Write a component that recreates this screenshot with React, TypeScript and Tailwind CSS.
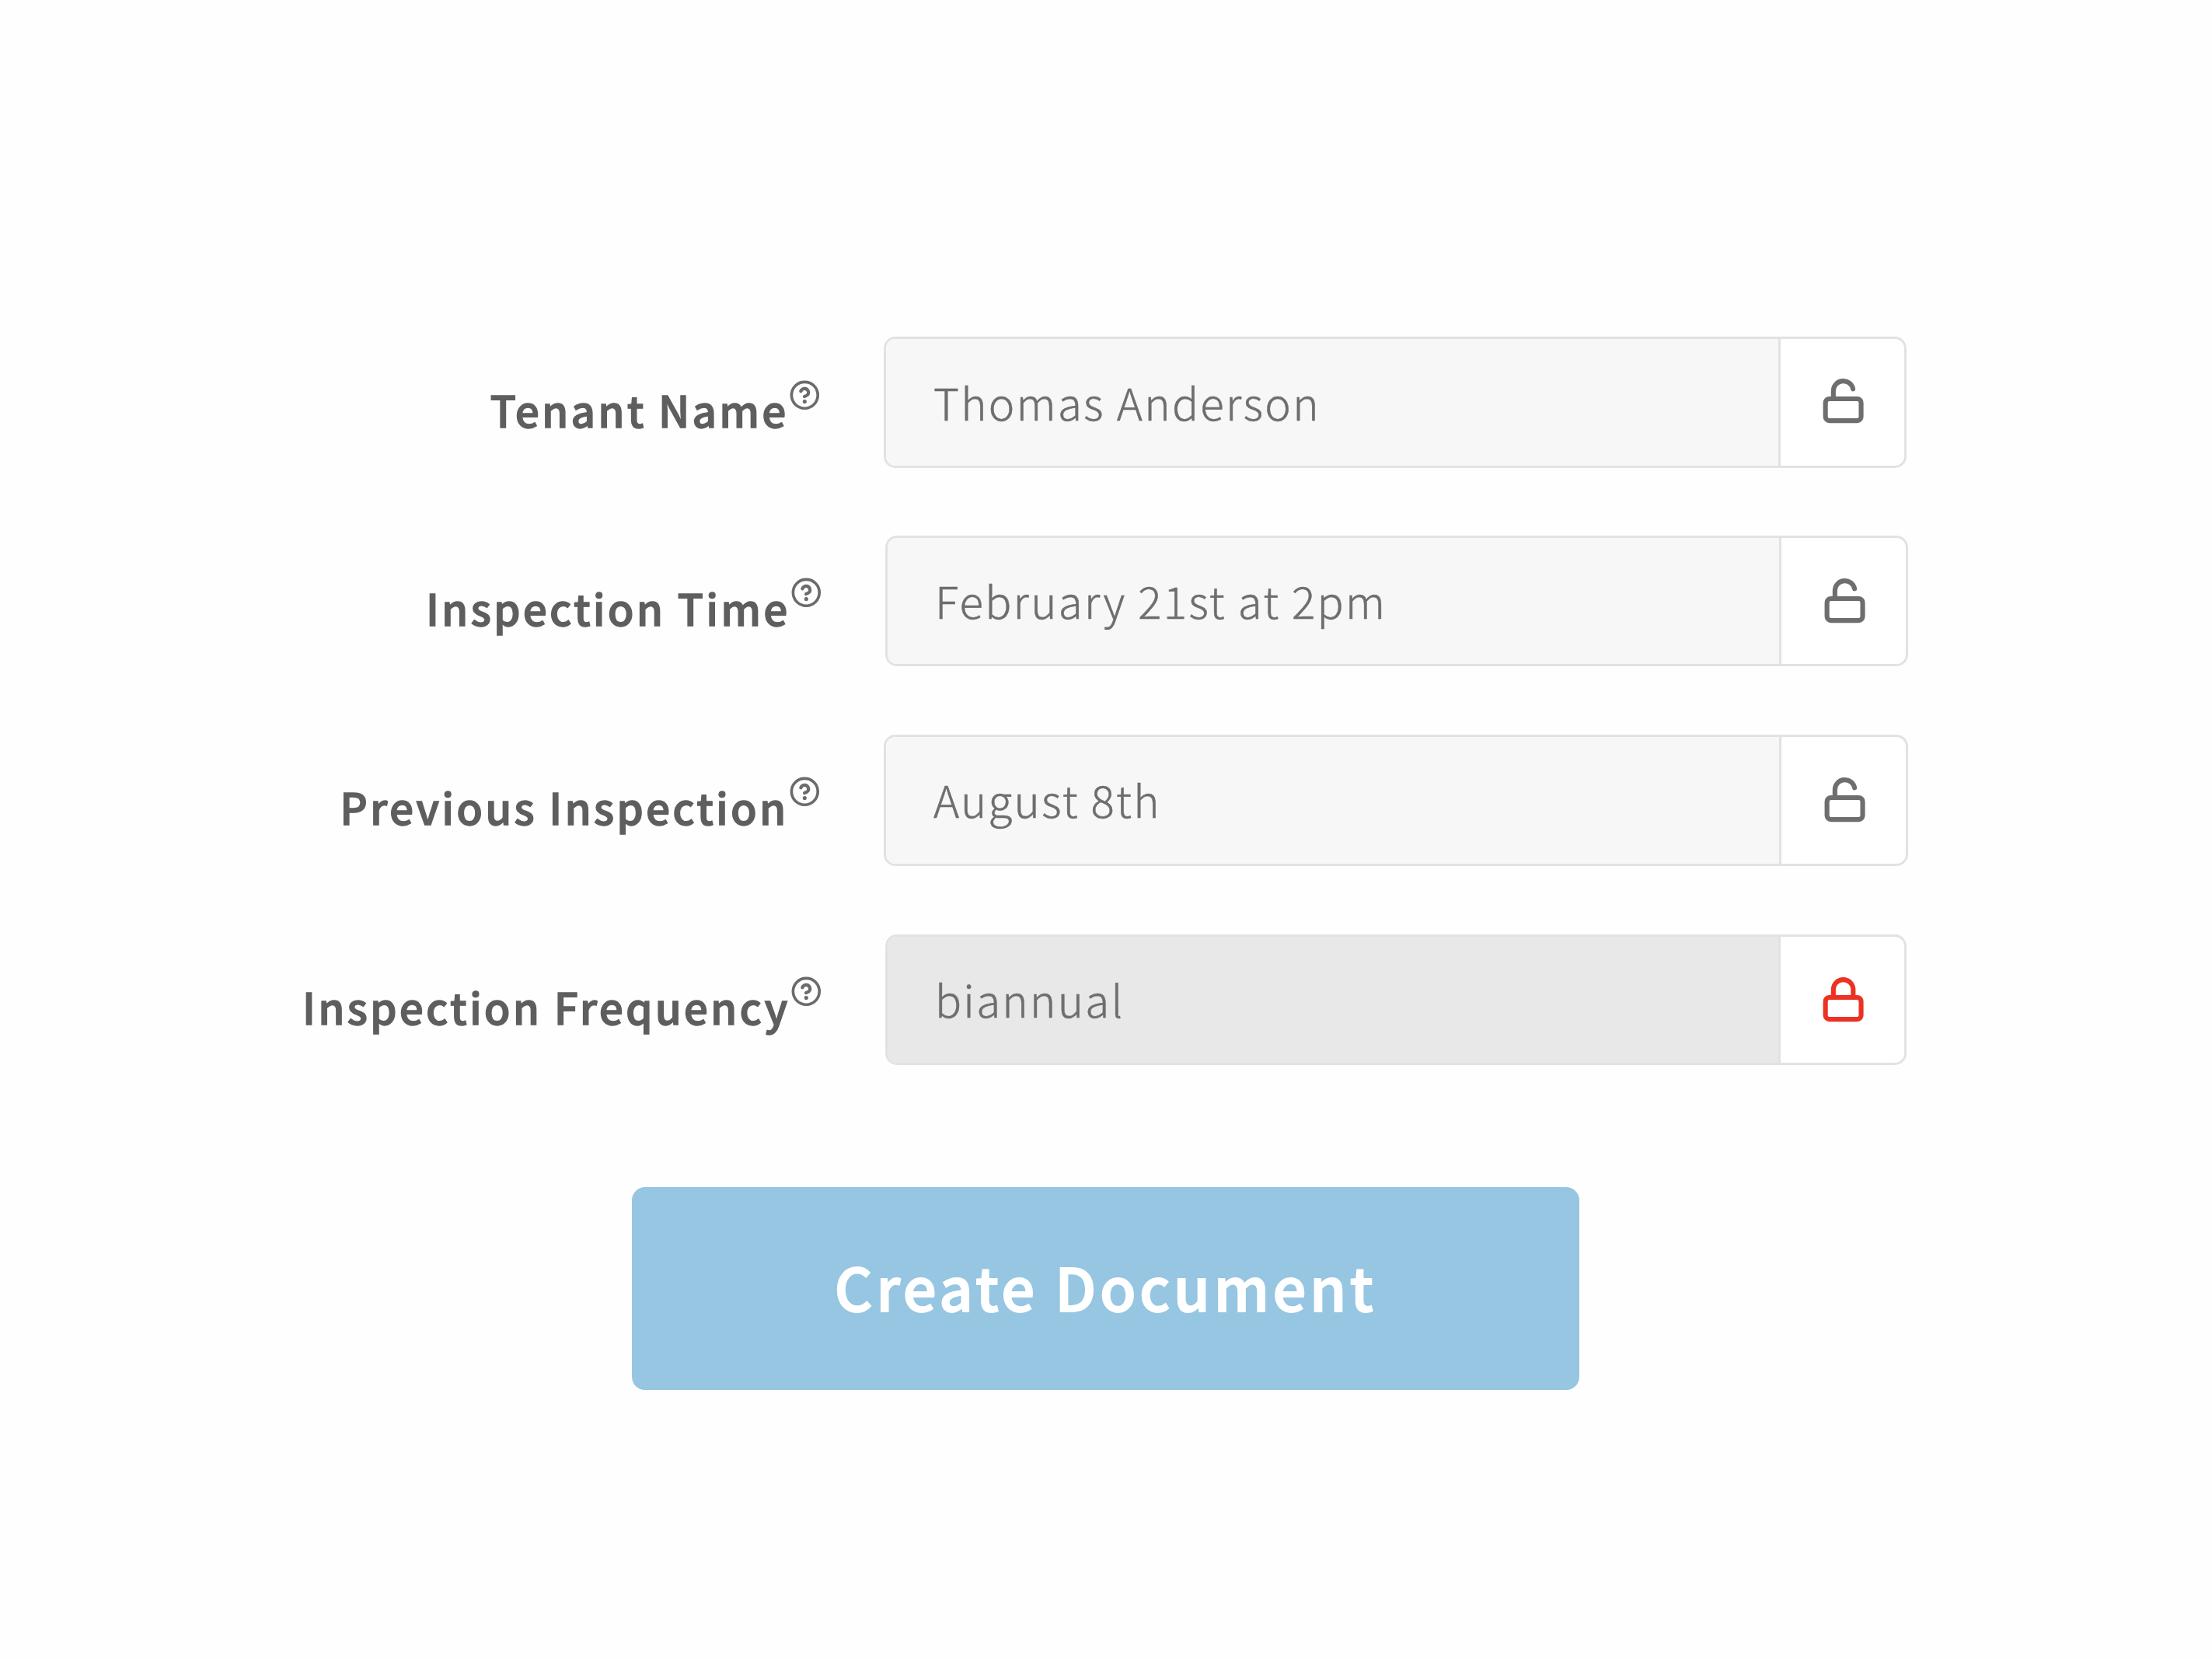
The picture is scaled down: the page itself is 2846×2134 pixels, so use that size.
import React from "react";

type Row = {
  label: string;
  value: string;
  locked?: boolean;
  rowClass: string;
  labelClass: string;
  helpClass: string;
  fieldClass: string;
  valueClass: string;
  lockClass: string;
};

const rows: Row[] = [
  {
    label: "Tenant Name",
    value: "Thomas Anderson",
    rowClass: "h-[169px]",
    labelClass: "w-[1137px] pt-[17px]",
    helpClass: "mb-[35px]",
    fieldClass: "w-[1316px]",
    valueClass: "w-[1151px] pl-[61px] pb-[3px] bg-[#f7f7f7]",
    lockClass: "pb-[4px]",
  },
  {
    label: "Inspection Time",
    value: "February 21st at 2pm",
    rowClass: "mt-[87px] h-[168px]",
    labelClass: "w-[1139px] pt-[16px]",
    helpClass: "mb-[37px]",
    fieldClass: "w-[1316px]",
    valueClass: "w-[1150px] pl-[61px] pb-[3px] bg-[#f7f7f7]",
    lockClass: "pb-[1px]",
  },
  {
    label: "Previous Inspection",
    value: "August 8th",
    rowClass: "mt-[88px] h-[169px]",
    labelClass: "w-[1137px] pt-[15px]",
    helpClass: "mb-[37px]",
    fieldClass: "w-[1318px]",
    valueClass: "w-[1152px] pl-[61px] pb-[5px] bg-[#f7f7f7]",
    lockClass: "pb-[2px]",
  },
  {
    label: "Inspection Frequency",
    value: "biannual",
    locked: true,
    rowClass: "mt-[88px] h-[168px]",
    labelClass: "w-[1139px] pt-[17px]",
    helpClass: "mb-[38px]",
    fieldClass: "w-[1314px]",
    valueClass: "w-[1149px] pl-[61px] pb-[3px] bg-[#e8e8e8]",
    lockClass: "pb-0",
  },
];

function HelpIcon() {
  return (
    <svg
      className="size-[40.6px] text-[#6b6b6b]"
      viewBox="0 0 24 24"
      fill="none"
      stroke="currentColor"
      strokeWidth="2.15"
      strokeLinecap="round"
      strokeLinejoin="round"
    >
      <circle cx="12" cy="12" r="10" />
      <path d="M9.09 9a3 3 0 0 1 5.83 1c0 2-3 3-3 3" strokeWidth="2.5" />
      <path d="M12 16.9h.01" strokeWidth="3" />
    </svg>
  );
}

function LockIcon({ locked }: { locked?: boolean }) {
  return (
    <svg
      className={locked ? "size-[61.2px] text-[#eb3223]" : "size-[61.2px] text-[#6e6e6e]"}
      viewBox="0 0 24 24"
      fill="none"
      stroke="currentColor"
      strokeWidth="2.4"
      strokeLinecap="round"
      strokeLinejoin="round"
    >
      <rect x="3" y="11" width="18" height="11" rx="2" />
      <path d={locked ? "M7 11V7a5 5 0 0 1 10 0v4" : "M7 11V7a5 5 0 0 1 9.9-1"} />
    </svg>
  );
}

export default function App() {
  return (
    <main className="flex h-[2134px] w-[2846px] flex-col bg-[#fefefe] pt-[433px] font-['Noto_Sans_CJK_SC',sans-serif] leading-none">
      {rows.map((row) => (
        <div key={row.label} className={`flex ${row.rowClass}`}>
          <div className={`flex shrink-0 items-center justify-end pr-[81px] ${row.labelClass}`}>
            <label className="text-[55px] font-medium tracking-[3.1px] whitespace-nowrap text-[#5e5e5e] [-webkit-text-stroke:1.3px_#5e5e5e]">
              {row.label}
            </label>
            <div className={`ml-[1px] shrink-0 ${row.helpClass}`}>
              <HelpIcon />
            </div>
          </div>
          <div className={`flex h-full shrink-0 overflow-hidden rounded-[15px] border-[3px] border-[#e2e2e2] bg-white ${row.fieldClass}`}>
            <div
              className={`flex shrink-0 items-center border-r-[3px] border-[#e2e2e2] text-[56.5px] font-light tracking-[2.27px] text-[#6e6e6e] [-webkit-text-stroke:0.5px_#6e6e6e] ${row.valueClass}`}
            >
              {row.value}
            </div>
            <div className={`flex flex-1 items-center justify-center pl-[3px] ${row.lockClass}`}>
              <LockIcon locked={row.locked} />
            </div>
          </div>
        </div>
      ))}
      <button className="mt-[157px] ml-[813px] h-[261px] w-[1219px] rounded-[17px] bg-[#96c6e2] pb-[8px] text-[76px] font-medium tracking-[4.45px] text-white [-webkit-text-stroke:1.8px_white]">
        Create Document
      </button>
    </main>
  );
}
